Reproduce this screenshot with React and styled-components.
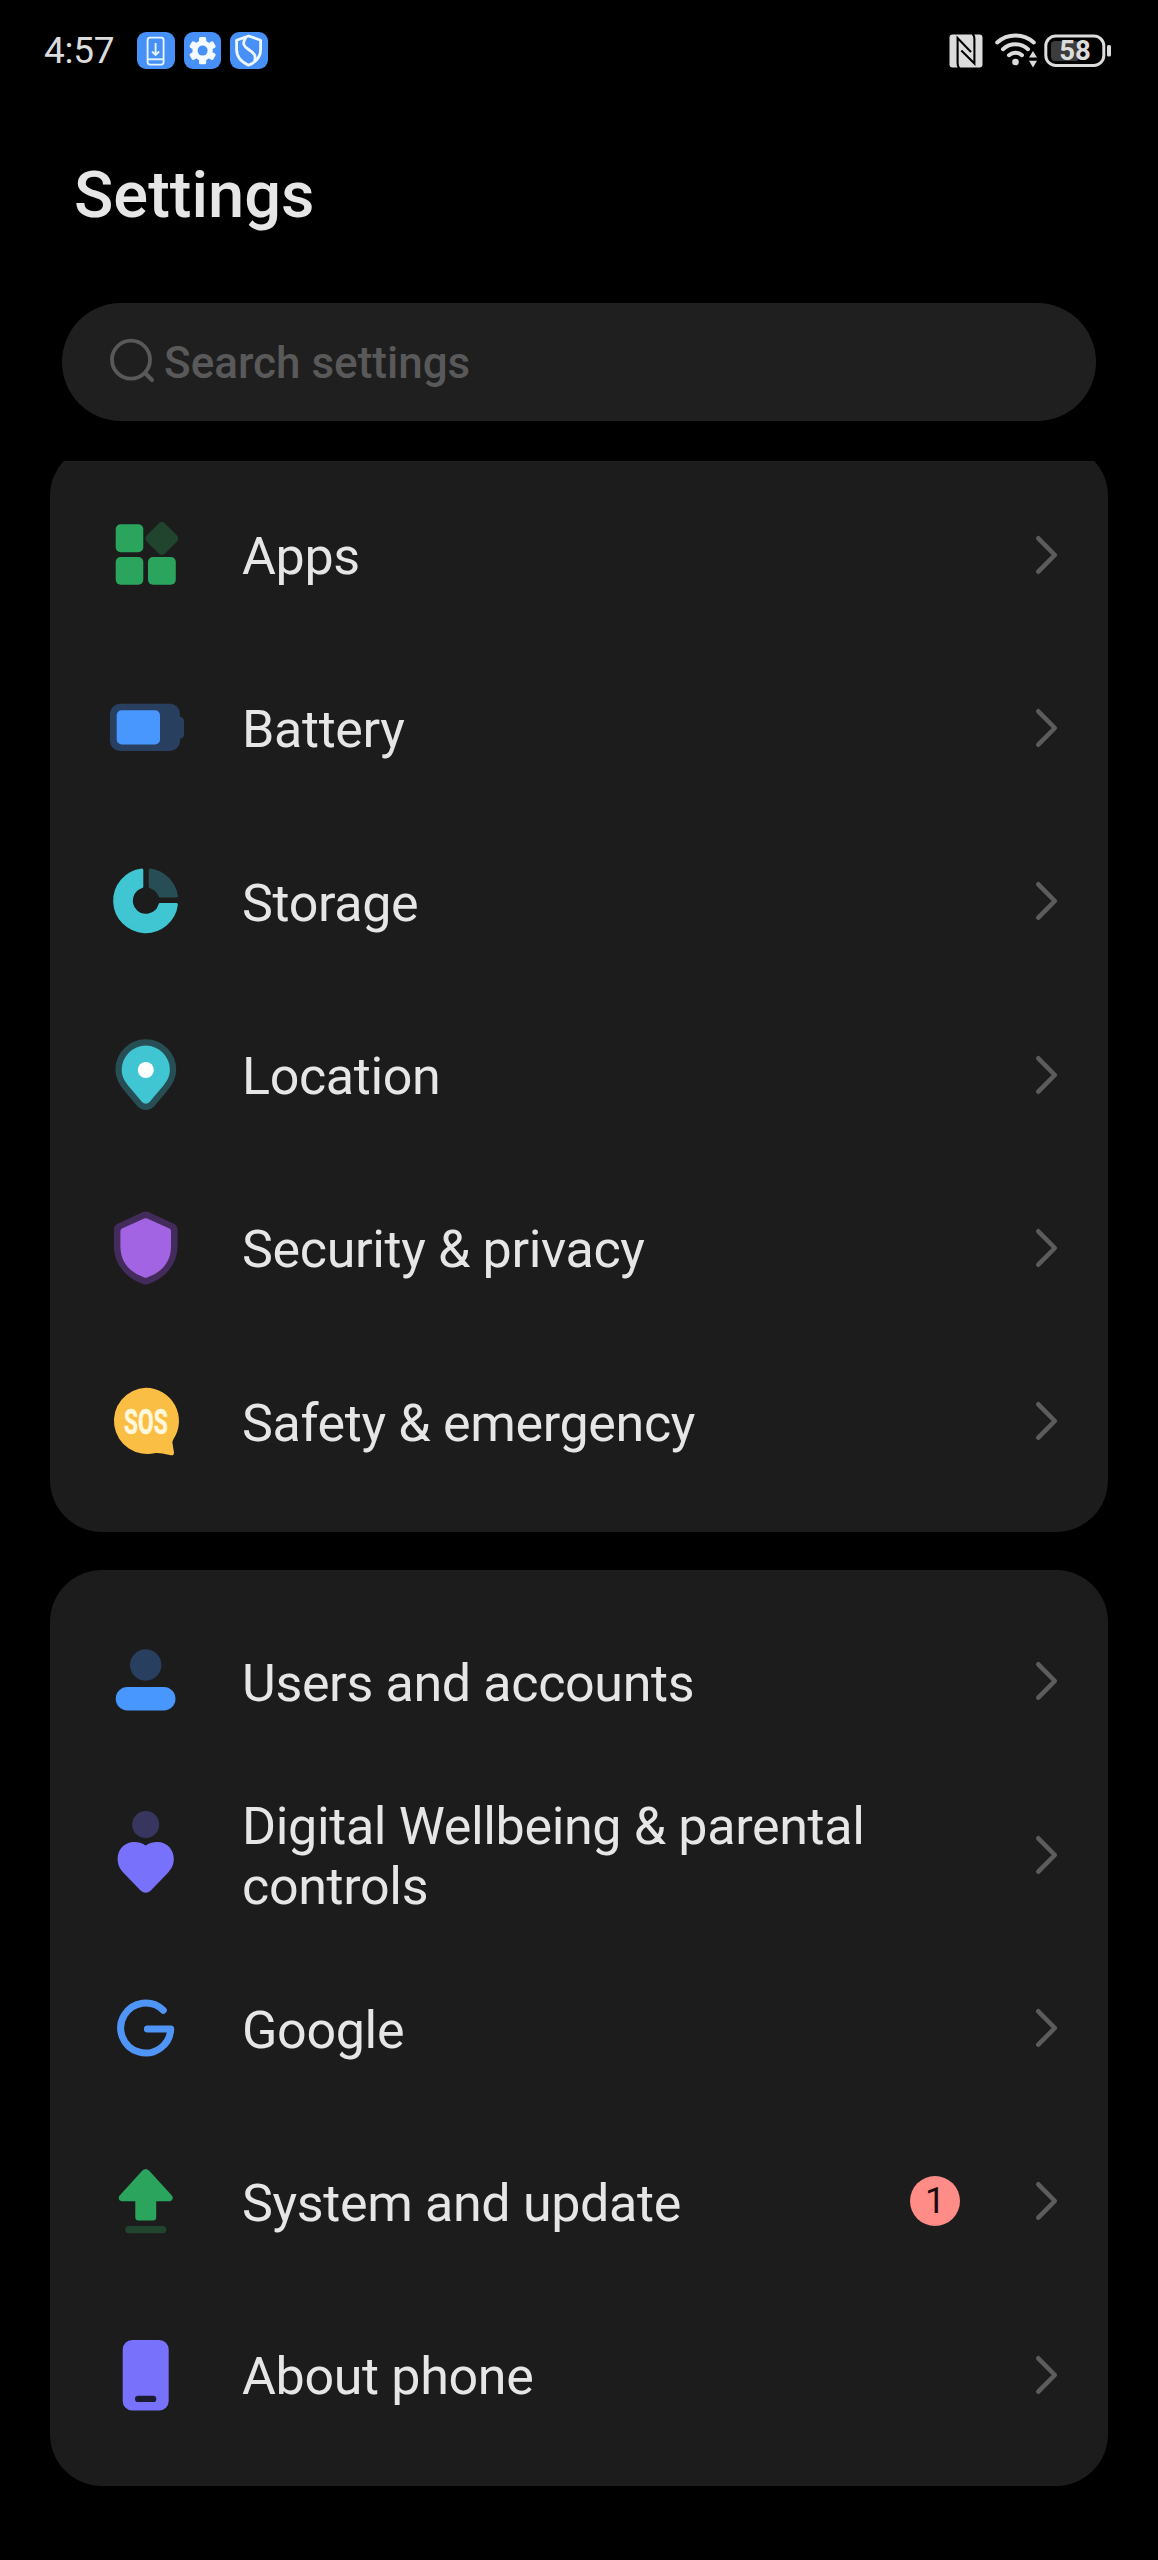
import styled, { createGlobalStyle } from "styled-components";

const GlobalStyle = createGlobalStyle`
  * {
    box-sizing: border-box;
    margin: 0;
    padding: 0;
  }

  body {
    background-color: #000;
    color: #e6e6e6;
    font-family: Roboto, "Noto Sans", sans-serif;
  }
`;

const Screen = styled.div`
  display: flex;
  flex-direction: column;
  width: 1158px;
  height: 2560px;
  overflow: hidden;
  background-color: #000;
`;

const StatusBar = styled.header`
  display: flex;
  align-items: center;
  justify-content: space-between;
  height: 101px;
  padding: 0 47px 0 44px;
`;

const StatusGroup = styled.div`
  display: flex;
  align-items: center;
  gap: ${({ $gap }) => $gap}px;
`;

const Clock = styled.time`
  width: 84px;
  font-size: 37px;
  line-height: 44px;
  letter-spacing: -0.3px;
  color: #dcdcdc;
`;

const AppBadge = styled.span`
  display: flex;
  width: 37.5px;
  height: 37.5px;
  border-radius: 9px;
  background-color: #4690f8;
`;

const Title = styled.h1`
  height: 202px;
  padding: 56px 0 0 74px;
  font-size: 65px;
  font-weight: 500;
  line-height: 76px;
`;

const SearchBox = styled.div`
  display: flex;
  flex-shrink: 0;
  align-items: center;
  height: 118px;
  margin: 0 62px;
  padding-left: 46px;
  border-radius: 59px;
  background-color: #1f1f1f;
  color: #595959;
  font-size: 44px;
  font-weight: 500;

  span {
    margin-left: 6px;
    padding-top: 1px;
  }
`;

const List = styled.main`
  flex: 1;
  margin-top: 40px;
  padding: 0 50px;
  overflow: hidden;
`;

const Card = styled.section`
  margin-top: ${({ $top }) => $top}px;
  padding: 24.5px 0;
  border-radius: 52px;
  background-color: #1c1c1c;
`;

const Row = styled.div`
  display: flex;
  align-items: center;
  height: 173.3px;
  padding: 0 48px 0 56px;
`;

const RowIcon = styled.svg`
  flex-shrink: 0;
  width: 80px;
  height: 80px;
  overflow: visible;
`;

const Label = styled.p`
  width: 660px;
  margin-left: 56px;
  padding-top: 5px;
  font-size: 52px;
  line-height: 60px;
  letter-spacing: -0.34px;
`;

const Count = styled.span`
  display: flex;
  align-items: center;
  justify-content: center;
  width: 50px;
  height: 50px;
  margin-left: 8px;
  border-radius: 50%;
  background-color: #ff8c87;
  color: #1c0a0a;
  font-size: 36px;
`;

const Arrow = styled.svg`
  width: 26px;
  height: 44px;
  margin-left: auto;
`;

const icons = {
  apps: (
    <>
      <g fill="#2ba55d">
        <rect x="9.7" y="9.2" width="27.6" height="28" rx="5" />
        <rect x="9.7" y="42.1" width="27.6" height="27.6" rx="5" />
        <rect x="42" y="42.1" width="27.8" height="27.6" rx="5" />
      </g>
      <rect
        x="42.9"
        y="10.6"
        width="25.8"
        height="25.8"
        rx="4.5"
        fill="#20442e"
        transform="rotate(45 55.8 23.5)"
      />
    </>
  ),
  battery: (
    <>
      <path
        d="M14 15.7H64A10 10 0 0 1 74 25.7V28.7Q78 29.5 78 33V46.4Q78 50 74 50.7V53A10 10 0 0 1 64 63H14A10 10 0 0 1 4 53V25.7A10 10 0 0 1 14 15.7Z"
        fill="#293f60"
      />
      <rect x="10.7" y="22.2" width="43.3" height="34.2" rx="5" fill="#4897ff" />
    </>
  ),
  storage: (
    <>
      <path
        d="M35.8 8.9A31 31 0 1 0 70.4 43.6H54A14.6 14.6 0 1 1 35.8 25.6Z"
        fill="#40c5d2"
        stroke="#40c5d2"
        strokeWidth="3"
        strokeLinejoin="round"
      />
      <path
        d="M44.2 8.9A31 31 0 0 1 70.4 35H54Q51.5 28.2 44.2 25.6Z"
        fill="#274e54"
        stroke="#274e54"
        strokeWidth="3"
        strokeLinejoin="round"
      />
    </>
  ),
  location: (
    <>
      <path
        d="M39.8 10.6A24.1 24.1 0 0 1 63.9 34.7C63.9 41.5 60.6 47 55.8 52.4L43.6 67Q39.8 70.6 36 67L23.8 52.4C19 47 15.7 41.5 15.7 34.7A24.1 24.1 0 0 1 39.8 10.6Z"
        fill="#274e54"
        stroke="#274e54"
        strokeWidth="12.6"
      />
      <path
        d="M39.8 10.6A24.1 24.1 0 0 1 63.9 34.7C63.9 41.5 60.6 47 55.8 52.4L43.6 67Q39.8 70.6 36 67L23.8 52.4C19 47 15.7 41.5 15.7 34.7A24.1 24.1 0 0 1 39.8 10.6Z"
        fill="#40c5d2"
      />
      <circle cx="39.8" cy="35" r="8" fill="#fff" />
    </>
  ),
  security: (
    <>
      <path
        d="M39.7 10L65 21.6V38.5C65 54 54 65 39.7 70C25.4 65 14.4 54 14.4 38.5V21.6Z"
        fill="#432c5c"
        stroke="#432c5c"
        strokeWidth="13"
        strokeLinejoin="round"
      />
      <path
        d="M38.2 10.6Q39.7 9.8 41.2 10.6L63.4 20.6Q65 21.4 65 23.2V38.5C65 54 56 64 41.2 69.4Q39.7 70 38.2 69.4C23.4 64 14.4 54 14.4 38.5V23.2Q14.4 21.4 16 20.6Z"
        fill="#a264e2"
      />
    </>
  ),
  safety: (
    <>
      <path
        d="M39.7 6.7A33.2 33.2 0 0 1 67.4 58.3Q66 60.6 66.6 63L68 71.4Q68 74.6 65 74.3L56.5 72.6Q53 71.8 49.5 72A33.2 33.2 0 1 1 39.7 6.7Z"
        fill="#fbbe45"
      />
      <text
        transform="translate(39.9 52.8) scale(.64 1)"
        textAnchor="middle"
        fontSize="35.5"
        fontWeight="700"
        fill="#fff8dc"
        stroke="#fff8dc"
        strokeWidth=".6"
      >
        SOS
      </text>
    </>
  ),
  users: (
    <>
      <circle cx="39.7" cy="24" r="15.7" fill="#293f60" />
      <rect x="9.7" y="46" width="59.8" height="23.4" rx="11.7" fill="#4897ff" />
    </>
  ),
  wellbeing: (
    <>
      <circle cx="39.7" cy="9.5" r="13.6" fill="#38355f" />
      <path
        d="M39.7 30.5C44.5 27.1 49 26.8 52.5 27.1C61.5 27.8 67.8 35 67.8 44C67.8 50.5 65 54.5 61 58.8L44.6 75.7Q39.7 79.9 34.8 75.7L18.4 58.8C14.4 54.5 11.6 50.5 11.6 44C11.6 35 17.9 27.8 26.9 27.1C30.4 26.8 34.9 27.1 39.7 30.5Z"
        fill="#7771fb"
      />
    </>
  ),
  google: (
    <path
      d="M57.3 22.2A25 25 0 1 0 64.7 40.9H41.4"
      fill="none"
      stroke="#4f95f6"
      strokeWidth="7"
      strokeLinecap="round"
      strokeLinejoin="round"
    />
  ),
  update: (
    <>
      <path
        d="M36.4 9.6Q39.7 6.6 43 9.6L65.6 34.2C68.2 37.2 66 40.3 63 40.3H50.2V56.3Q50.2 59.5 47 59.5H32.5Q29.3 59.5 29.3 56.3V40.3H16.5C13.5 40.3 11.3 37.2 13.9 34.2Z"
        fill="#2ba55d"
      />
      <rect x="19.3" y="65" width="41" height="7.3" rx="3.6" fill="#20442e" />
    </>
  ),
  phone: (
    <>
      <rect x="16.7" y="5" width="46" height="70.5" rx="9.5" fill="#7771fb" />
      <rect x="29" y="60.7" width="21.3" height="6.4" rx="3.2" fill="#1c1c30" />
    </>
  ),
};

const groups = [
  {
    // scrolled a little under the search box
    top: -17.5,
    items: [
      { icon: "apps", label: "Apps" },
      { icon: "battery", label: "Battery" },
      { icon: "storage", label: "Storage" },
      { icon: "location", label: "Location" },
      { icon: "security", label: "Security & privacy" },
      { icon: "safety", label: "Safety & emergency" },
    ],
  },
  {
    top: 38,
    items: [
      { icon: "users", label: "Users and accounts" },
      { icon: "wellbeing", label: "Digital Wellbeing & parental controls" },
      { icon: "google", label: "Google" },
      { icon: "update", label: "System and update", count: 1 },
      { icon: "phone", label: "About phone" },
    ],
  },
];

const Status = () => {
  return (
    <StatusBar>
      <StatusGroup $gap={9}>
        <Clock>4:57</Clock>
        <AppBadge>
          <svg viewBox="0 0 37.5 37.5" fill="none" stroke="#e4f4ff" strokeWidth="1.9">
            <rect x="10.6" y="5.6" width="16" height="27" rx="2.5" />
            <path d="M10.6 27.3H26.6" />
            <path d="M18.6 11V22.5M15 19.5L18.6 23L22.2 19.5" />
          </svg>
        </AppBadge>
        <AppBadge>
          <svg viewBox="0 0 37.5 37.5">
            <g fill="#f4faff">
              <circle cx="18.6" cy="18.6" r="10.2" />
              {[0, 60, 120].map((deg) => (
                <rect
                  key={deg}
                  x="15"
                  y="5"
                  width="7.2"
                  height="27.2"
                  rx="1.5"
                  transform={`rotate(${deg} 18.6 18.6)`}
                />
              ))}
            </g>
            <circle cx="18.6" cy="18.6" r="5" fill="#4690f8" />
          </svg>
        </AppBadge>
        <AppBadge>
          <svg
            viewBox="0 0 37.5 37.5"
            fill="none"
            stroke="#f0f8ff"
            strokeWidth="2.8"
            strokeLinejoin="round"
          >
            <path d="M18.6 4L30.6 8.2V17.5C30.6 24.5 26 30 18.6 33.2C11.2 30 6.6 24.5 6.6 17.5V8.2Z" />
            <path d="M16 5.5C11.5 11.5 14 14.5 18.6 17.5C24 21 26.5 23.5 24.5 29" />
          </svg>
        </AppBadge>
      </StatusGroup>
      <StatusGroup $gap={12}>
        <svg width="34" height="34" viewBox="0 0 34 34">
          <rect x=".5" y=".5" width="33" height="33" rx="3" fill="#dcdcdc" />
          <path
            d="M10.5 34Q8.6 33 8.6 29V4L22 18M23.4 0Q25.4 1 25.4 5V29.5L12.3 16.5"
            fill="none"
            stroke="#000"
            strokeWidth="2.1"
          />
        </svg>
        <StatusGroup $gap={7}>
          <svg width="42" height="36" viewBox="0 0 42 36">
            <g fill="none" stroke="#dcdcdc" strokeWidth="4" strokeLinecap="round">
              <path d="M2.2 9.5C12.5 .2 28.5 .2 38.8 9.5" />
              <path d="M8 16.2C15 9.6 26 9.6 33 16.2" />
              <path d="M14 22.2C17.7 18.8 23.3 18.8 27 22.2" />
            </g>
            <circle cx="20.5" cy="29" r="3.3" fill="#dcdcdc" />
            <path d="M34 24.5L38 18L42 24.5ZM34 27.8L38 34.5L42 27.8Z" fill="#dcdcdc" />
          </svg>
          <svg width="67" height="34" viewBox="0 0 67 34">
            <rect x="7" y="7" width="28" height="20" rx="4" fill="#3c3c3c" />
            <rect
              x="1.8"
              y="2"
              width="58"
              height="29.4"
              rx="10"
              fill="none"
              stroke="#dcdcdc"
              strokeWidth="3"
            />
            <rect x="63" y="11" width="4" height="11.5" rx="1.5" fill="#dcdcdc" />
            <text
              x="31"
              y="26.4"
              textAnchor="middle"
              fontSize="27.5"
              fontWeight="700"
              fill="#dcdcdc"
            >
              58
            </text>
          </svg>
        </StatusGroup>
      </StatusGroup>
    </StatusBar>
  );
};

const SettingRow = ({ icon, label, count }) => {
  return (
    <Row>
      <RowIcon viewBox="0 0 80 80">{icons[icon]}</RowIcon>
      <Label>{label}</Label>
      {count && <Count>{count}</Count>}
      <Arrow viewBox="0 0 26 44">
        <path
          d="M4.3 5.3L20.8 22L4.3 38.7"
          fill="none"
          stroke="#5c5c5c"
          strokeWidth="4.6"
          strokeLinecap="round"
          strokeLinejoin="round"
        />
      </Arrow>
    </Row>
  );
};

const App = () => {
  return (
    <Screen>
      <GlobalStyle />
      <Status />
      <Title>Settings</Title>
      <SearchBox>
        <svg width="50" height="50" viewBox="0 0 50 50" fill="none">
          <circle cx="23" cy="22.7" r="19" stroke="#595959" strokeWidth="3.8" />
          <path
            d="M37 36L44 43"
            stroke="#595959"
            strokeWidth="4"
            strokeLinecap="round"
          />
        </svg>
        <span>Search settings</span>
      </SearchBox>
      <List>
        {groups.map((group) => (
          <Card key={group.top} $top={group.top}>
            {group.items.map((item) => (
              <SettingRow key={item.label} {...item} />
            ))}
          </Card>
        ))}
      </List>
    </Screen>
  );
};

export default App;
